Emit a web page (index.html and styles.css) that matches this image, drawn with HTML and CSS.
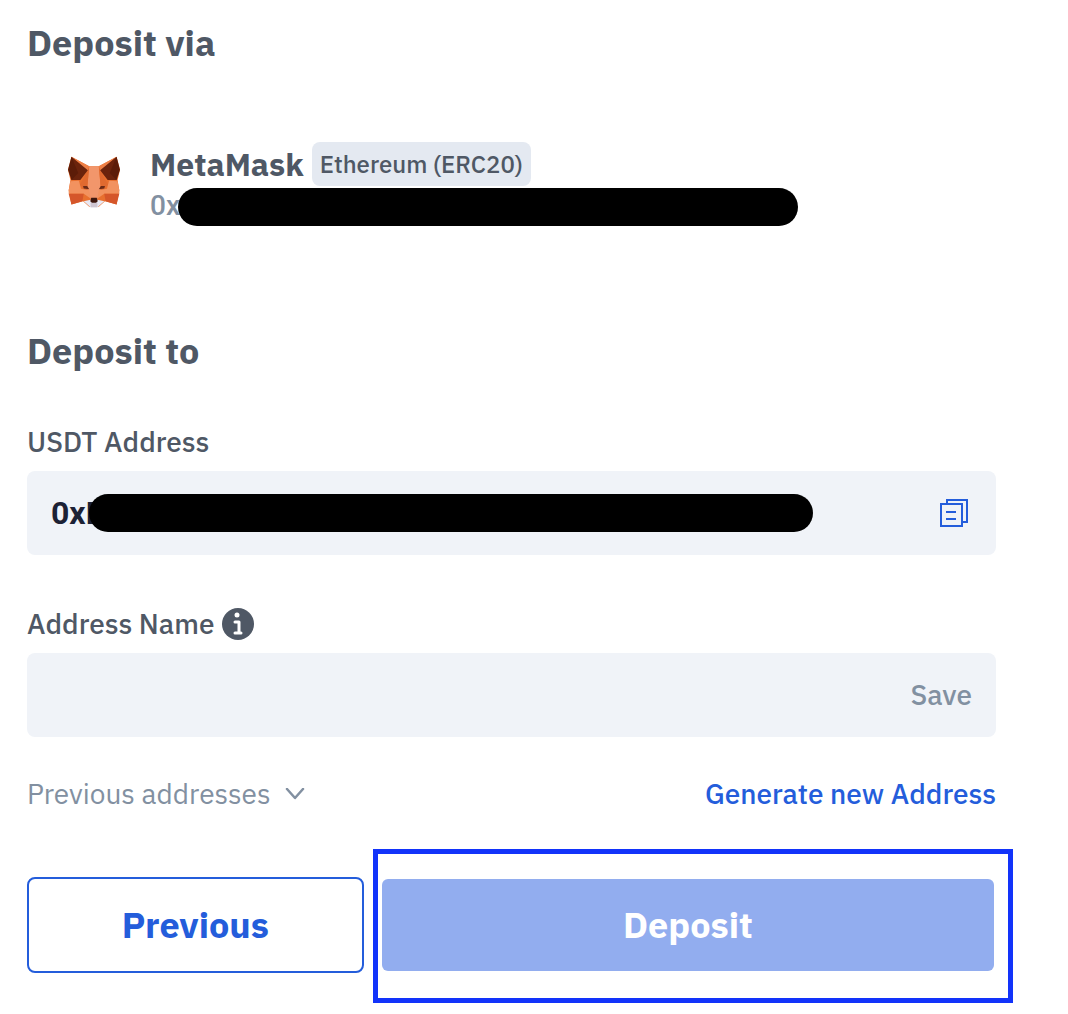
FILE: index.html
```html
<!DOCTYPE html>
<html lang="en">
<head>
    <meta charset="UTF-8">
    <meta name="viewport" content="width=device-width, initial-scale=1.0">
    <title>Deposit</title>
    <link rel="stylesheet" href="styles.css">
</head>
<body>

    <main class="deposit">
        <!-- Source wallet -->
        <h2>Deposit via</h2>
        <div class="wallet">
            <svg class="wallet-logo" viewBox="0 0 152 152" aria-hidden="true">
                <path fill="#e8702f" d="M10 2 62 30H90L142 2 152 40 145 70 150 100 142 142 108 132 90 148H62L44 132 10 142 2 100 7 70 0 40Z"/>
                <path fill="#f2966b" d="M62 30H90L96 96 86 124H66L56 96Z"/>
                <path fill="#e06a30" d="M62 30 56 96 62 110 34 84 44 68ZM90 30 96 96 90 110 118 84 108 68Z"/>
                <path fill="#ee7f45" d="M10 2 62 30 56 46ZM142 2 90 30 96 46Z"/>
                <path fill="#f2925f" d="M7 74 32 72 38 96 62 100 66 124 46 110H2V100ZM145 74 120 72 114 96 90 100 86 124 106 110H150V100Z"/>
                <path fill="#d5562a" d="M2 110H46L42 132 10 142ZM150 110H106L110 132 142 142Z"/>
                <path fill="#6b230c" d="M10 2 58 42 36 70H10L8 46ZM142 2 94 42 116 70H142L144 46Z"/>
                <path fill="#5c1c08" d="M10 2 0 40 10 70 30 50ZM142 2 152 40 142 70 122 50Z"/>
                <path fill="#6b2b18" d="M44 88H56L62 97 46 95ZM108 88H96L90 97 106 95Z"/>
                <path fill="#e8e9f4" d="M46 132 66 128H86L106 132 86 150H66Z"/>
                <path fill="#cfc6d2" d="M66 136H86V150H66Z"/>
                <path fill="#3d170d" d="M68 122H84L87 132 82 137H70L65 132Z"/>
            </svg>
            <div class="wallet-info">
                <div class="wallet-title">
                    <strong>MetaMask</strong>
                    <span class="network">Ethereum (ERC20)</span>
                </div>
                <div class="wallet-address">0x<span class="mask"></span></div>
            </div>
        </div>

        <!-- Destination address -->
        <h2>Deposit to</h2>
        <label class="field-label" for="address">USDT Address</label>
        <div class="field">
            <input type="text" id="address" value="0xE" readonly>
            <span class="mask mask-field"></span>
            <button class="icon-btn" type="button" aria-label="Copy address">
                <svg width="28" height="28" viewBox="0 0 28 28" fill="none" stroke="#245ddb" stroke-width="2">
                    <path d="M7 5V1H27V23H22"/>
                    <path d="M1 5H22V27H1Z"/>
                    <path d="M6 13H16M6 20H16"/>
                </svg>
            </button>
        </div>

        <div class="field-label">
            <label for="addressName">Address Name</label>
            <svg width="32" height="32" viewBox="0 0 32 32" aria-hidden="true">
                <circle cx="16" cy="16" r="16" fill="#4f5865"/>
                <circle cx="15" cy="7" r="2.5" fill="#fff"/>
                <path fill="none" stroke="#fff" stroke-width="3" stroke-linecap="round" stroke-linejoin="round" d="M13 14H17V25M13 25H19"/>
            </svg>
        </div>
        <div class="field">
            <input type="text" id="addressName">
            <button class="save-btn" type="button">Save</button>
        </div>

        <div class="links">
            <button class="previous-addresses" type="button">
                Previous addresses
                <svg width="20" height="12" viewBox="0 0 20 12" fill="none" stroke="#8290a1" stroke-width="2.5" stroke-linecap="round" stroke-linejoin="round" aria-hidden="true">
                    <path d="M2 1 10 10 18 1"/>
                </svg>
            </button>
            <a class="generate" href="#">Generate new Address</a>
        </div>

        <!-- Actions -->
        <div class="actions">
            <button class="btn btn-outline" type="button">Previous</button>
            <div class="highlight">
                <button class="btn btn-primary" type="button">Deposit</button>
            </div>
        </div>
    </main>

</body>
</html>
```
FILE: styles.css
```css
* {
    box-sizing: border-box;
}

body {
    margin: 0;
    background-color: #fff;
    color: #4f5865;
    font-family: "IBM Plex Sans", Roboto, "Liberation Sans", sans-serif;
    font-size: 28px;
    font-weight: 500;
    line-height: 36px;
}

button,
input {
    font: inherit;
    border: none;
    background: none;
    padding: 0;
}

button {
    cursor: pointer;
}

svg {
    display: block;
    flex-shrink: 0;
}

.deposit {
    padding: 20px 72px 40px 27px;
}

h2 {
    margin: 0;
    font-size: 36px;
    font-weight: 700;
    line-height: 45px;
}

/* Wallet */
.wallet {
    display: flex;
    align-items: center;
    gap: 30px;
    padding: 77px 41px 102px;
}

.wallet-logo {
    width: 52px;
    height: 52px;
    margin-bottom: 4px;
}

.wallet-info {
    flex: 1;
}

.wallet-title {
    display: flex;
    align-items: center;
    gap: 8px;
}

.wallet-title strong {
    font-size: 32px;
    font-weight: 700;
    line-height: 44px;
}

.network {
    padding: 0 8px;
    border-radius: 8px;
    background-color: #e4e9f1;
    font-size: 24px;
    line-height: 44px;
}

.wallet-address {
    position: relative;
    padding: 2px 0;
    color: #8290a1;
    font-family: Roboto, sans-serif;
}

.mask {
    position: absolute;
    top: 2px;
    left: 28px;
    width: 620px;
    height: 38px;
    border-radius: 19px;
    background-color: #000;
}

.mask-field {
    top: 23px;
    left: 62px;
    width: 724px;
}

/* Fields */
.field-label {
    display: flex;
    align-items: center;
    gap: 8px;
    height: 36px;
    margin-top: 51px;
}

.field {
    position: relative;
    display: flex;
    align-items: center;
    height: 84px;
    margin-top: 11px;
    padding: 0 24px;
    border-radius: 8px;
    background-color: #f0f3f8;
}

.field input {
    flex: 1;
    min-width: 0;
    color: #1c2135;
    font-family: Roboto, sans-serif;
    font-size: 32px;
    font-weight: 700;
    outline: none;
}

.icon-btn {
    padding: 4px;
}

.save-btn {
    color: #8290a1;
}

/* Links */
.links {
    display: flex;
    justify-content: space-between;
    margin-top: 39px;
}

.previous-addresses {
    display: flex;
    align-items: center;
    gap: 14px;
    color: #8290a1;
    font-weight: 400;
}

.generate {
    color: #245ddb;
    text-decoration: none;
}

/* Buttons */
.actions {
    display: grid;
    grid-template-columns: 11fr 20fr;
    align-items: center;
    gap: 18px;
    margin-top: 65px;
    padding-right: 2px;
}

.btn {
    border-radius: 8px;
    font-size: 36px;
    font-weight: 700;
}

.btn-outline {
    height: 96px;
    border: 2px solid #245ddb;
    color: #245ddb;
}

.highlight {
    position: relative;
}

.highlight::after {
    content: "";
    position: absolute;
    inset: -30px -19px -32px -9px;
    border: 5px solid #1233fa;
    pointer-events: none;
}

.btn-primary {
    display: block;
    width: 100%;
    height: 92px;
    border-radius: 6px;
    background-color: #92adef;
    color: #fff;
}
```
